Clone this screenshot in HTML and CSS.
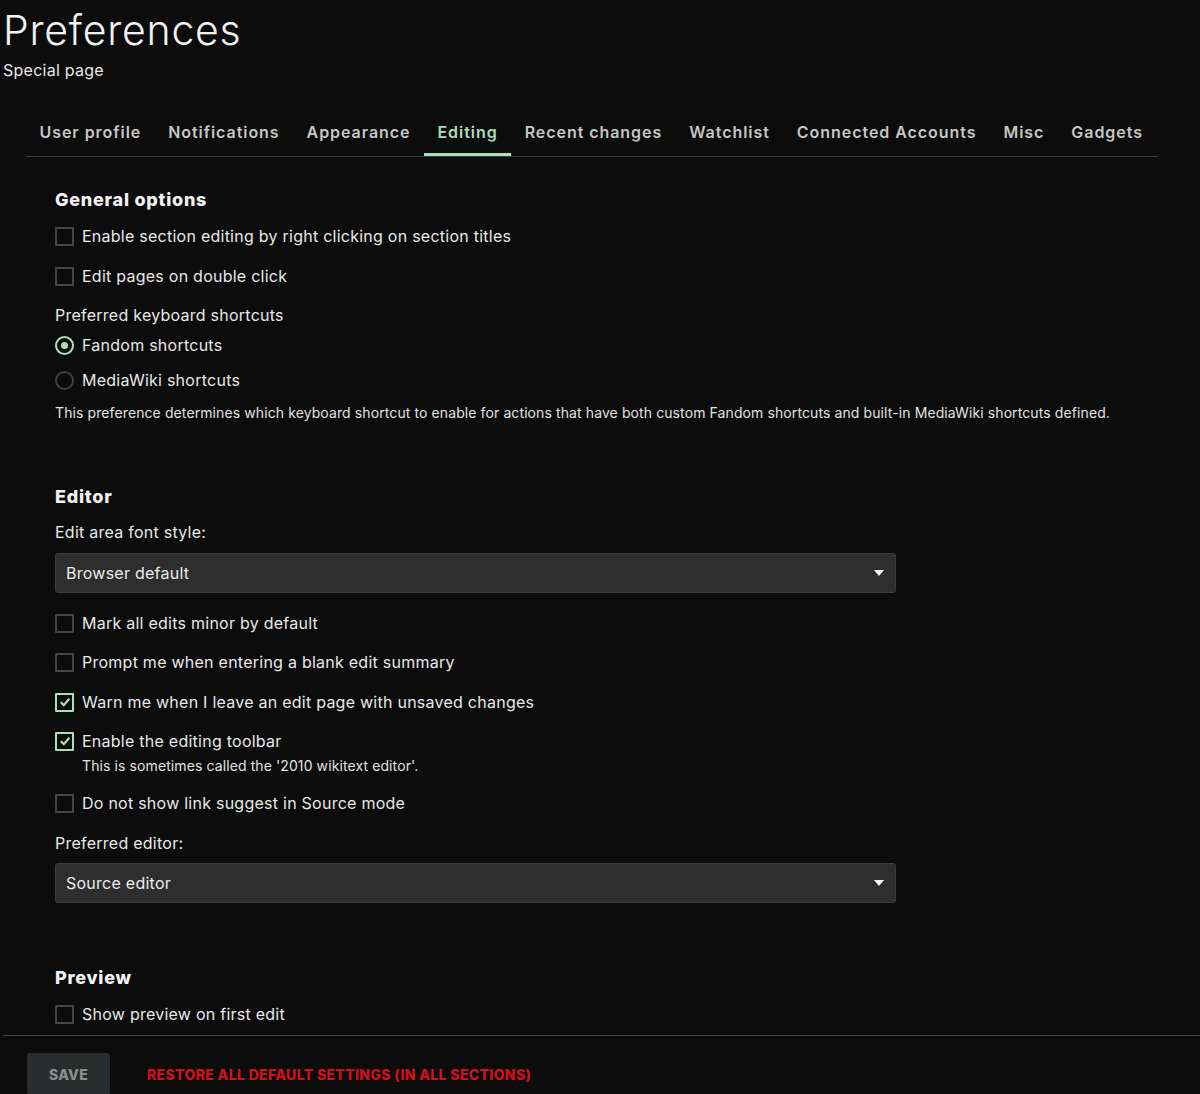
FILE: index.html
```html
<!DOCTYPE html>
<html lang="en">
<head>
<meta charset="utf-8">
<title>Preferences</title>
<link rel="stylesheet" href="styles.css">
</head>
<body>
<div class="page">
  <header class="page-header">
    <h1 class="page-title">Preferences</h1>
    <div class="page-subtitle">Special page</div>
  </header>

  <nav class="tabs">
    <a class="tab">User profile</a>
    <a class="tab">Notifications</a>
    <a class="tab">Appearance</a>
    <a class="tab tab-active">Editing</a>
    <a class="tab">Recent changes</a>
    <a class="tab">Watchlist</a>
    <a class="tab">Connected Accounts</a>
    <a class="tab">Misc</a>
    <a class="tab">Gadgets</a>
  </nav>

  <div class="panel">
    <section class="section">
      <h2 class="section-title">General options</h2>
      <label class="option"><span class="checkbox"></span>Enable section editing by right clicking on section titles</label>
      <label class="option"><span class="checkbox"></span>Edit pages on double click</label>
      <div class="field-label">Preferred keyboard shortcuts</div>
      <label class="option option-radio-first"><span class="radio radio-on"></span>Fandom shortcuts</label>
      <label class="option option-radio"><span class="radio"></span>MediaWiki shortcuts</label>
      <p class="help">This preference determines which keyboard shortcut to enable for actions that have both custom Fandom shortcuts and built-in MediaWiki shortcuts defined.</p>
    </section>

    <section class="section section-gap">
      <h2 class="section-title">Editor</h2>
      <div class="field-label field-label-tight">Edit area font style:</div>
      <div class="select"><span>Browser default</span><span class="caret"></span></div>
      <label class="option option-after-select"><span class="checkbox"></span>Mark all edits minor by default</label>
      <label class="option option-close"><span class="checkbox"></span>Prompt me when entering a blank edit summary</label>
      <label class="option"><span class="checkbox checkbox-on"><svg viewBox="0 0 14 14" width="14" height="14"><path d="M2.8 7.2 L5.8 10.1 L11.3 3.8" fill="none" stroke="#a9dfba" stroke-width="2.2"/></svg></span>Warn me when I leave an edit page with unsaved changes</label>
      <label class="option option-close"><span class="checkbox checkbox-on"><svg viewBox="0 0 14 14" width="14" height="14"><path d="M2.8 7.2 L5.8 10.1 L11.3 3.8" fill="none" stroke="#a9dfba" stroke-width="2.2"/></svg></span>Enable the editing toolbar</label>
      <p class="help help-indent">This is sometimes called the '2010 wikitext editor'.</p>
      <label class="option option-close"><span class="checkbox"></span>Do not show link suggest in Source mode</label>
      <div class="field-label field-label-loose">Preferred editor:</div>
      <div class="select select-tight"><span>Source editor</span><span class="caret"></span></div>
    </section>

    <section class="section section-gap-lg">
      <h2 class="section-title">Preview</h2>
      <label class="option"><span class="checkbox"></span>Show preview on first edit</label>
    </section>
  </div>

  <footer class="footer">
    <button class="btn-save">SAVE</button>
    <a class="restore-link">RESTORE ALL DEFAULT SETTINGS (IN ALL SECTIONS)</a>
  </footer>
</div>
</body>
</html>
```

FILE: styles.css
```css
html, body {
  margin: 0;
  padding: 0;
  background: #0c0c0c;
}

body {
  font-family: "Inter", "Noto Sans", sans-serif;
  color: #e8e8e8;
  font-size: 16px;
}

.page {
  padding-left: 3px;
  overflow: hidden;
  height: 1094px;
}

.page-title {
  margin: 6px 0 0;
  font-size: 41px;
  line-height: 49px;
  font-weight: 300;
  color: #f2f2f2;
  letter-spacing: 0.75px;
}

.page-subtitle {
  margin-top: 3px;
  font-size: 16px;
  line-height: 24px;
  color: #e8e8e8;
  letter-spacing: 0.25px;
}

.tabs {
  display: flex;
  margin: 27px 0 0 23px;
  width: 1132px;
  border-bottom: 1px solid #3e3e3e;
}

.tab {
  padding: 13px 13.5px 11px;
  line-height: 20px;
  font-size: 16px;
  font-weight: 600;
  color: #c6c6c6;
  border-bottom: 3px solid transparent;
  letter-spacing: 0.95px;
  white-space: nowrap;
}

.tab-active {
  color: #a9dfba;
  border-bottom-color: #a9dfba;
}

.panel {
  padding-left: 52px;
  padding-top: 31px;
}

.section-title {
  margin: 0;
  font-size: 18px;
  line-height: 24px;
  font-weight: 800;
  color: #f2f2f2;
  letter-spacing: 0.75px;
}

.section-gap {
  margin-top: 62px;
}

.section-gap-lg {
  margin-top: 63px;
}

.option {
  display: flex;
  align-items: center;
  gap: 8px;
  height: 24px;
  line-height: 24px;
  margin-top: 16px;
  font-size: 16px;
  color: #e8e8e8;
  letter-spacing: 0.25px;
}

.section-title + .option {
  margin-top: 12px;
}

.option-close {
  margin-top: 15px;
}

.checkbox {
  box-sizing: border-box;
  width: 19px;
  height: 19px;
  border: 2px solid #454545;
  border-radius: 1px;
  display: flex;
  align-items: center;
  justify-content: center;
  flex-shrink: 0;
}

.checkbox-on {
  border-color: #a9dfba;
}

.radio {
  box-sizing: border-box;
  width: 19px;
  height: 19px;
  border: 2px solid #3f3f3f;
  border-radius: 50%;
  flex-shrink: 0;
  display: flex;
  align-items: center;
  justify-content: center;
}

.radio-on {
  border-color: #a9dfba;
}

.radio-on::after {
  content: "";
  width: 7px;
  height: 7px;
  border-radius: 50%;
  background: #a9dfba;
}

.field-label {
  margin-top: 15px;
  line-height: 24px;
  font-size: 16px;
  color: #e8e8e8;
  letter-spacing: 0.25px;
}

.field-label-tight {
  margin-top: 11px;
}

.field-label-loose {
  margin-top: 16px;
}

.option-radio-first {
  margin-top: 6px;
}

.option-radio {
  margin-top: 11px;
}

.help {
  margin: 11px 0 0;
  font-size: 14px;
  line-height: 20px;
  color: #e2e2e2;
  letter-spacing: 0.1px;
}

.help-indent {
  margin-top: 3px;
  padding-left: 27px;
}

.select {
  box-sizing: border-box;
  margin-top: 9px;
  width: 841px;
  height: 40px;
  background: #2e2e2e;
  border: 1px solid #3c3c3c;
  border-radius: 3px;
  display: flex;
  align-items: center;
  justify-content: space-between;
  padding: 0 11px 0 10px;
  font-size: 16px;
  color: #ececec;
  letter-spacing: 0.25px;
}

.select-tight {
  margin-top: 8px;
}

.caret {
  width: 0;
  height: 0;
  border-left: 5.5px solid transparent;
  border-right: 5.5px solid transparent;
  border-top: 6px solid #f4f4f4;
}

.option-after-select {
  margin-top: 18px;
}

.footer {
  margin-top: 9px;
  border-top: 1px solid #464646;
  padding: 17px 0 0 24px;
  display: flex;
  align-items: center;
  gap: 37px;
}

.btn-save {
  width: 83px;
  height: 42px;
  background: #292c2c;
  border: none;
  border-radius: 3px;
  font-family: inherit;
  font-size: 14px;
  font-weight: 800;
  color: #8c8c8c;
  letter-spacing: 0.3px;
}

.restore-link {
  font-size: 14px;
  font-weight: 800;
  color: #d20f1c;
  letter-spacing: 0.35px;
}
```
